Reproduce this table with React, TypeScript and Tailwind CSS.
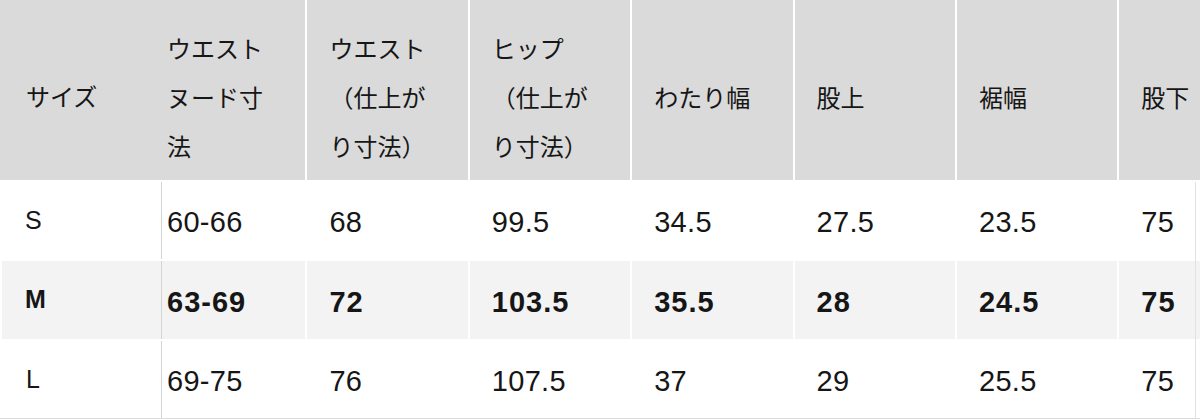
import { useEffect, useRef } from "react";

// size chart columns (the first "サイズ" column is frozen on the left)
const columns = [
  { head: ["ウエスト", "ヌード寸", "法"], s: "60-66", m: "63-69", l: "69-75" },
  { head: ["ウエスト", "（仕上が", "り寸法）"], s: "68", m: "72", l: "76" },
  { head: ["ヒップ", "（仕上が", "り寸法）"], s: "99.5", m: "103.5", l: "107.5" },
  { head: ["わたり幅"], s: "34.5", m: "35.5", l: "37" },
  { head: ["股上"], s: "27.5", m: "28", l: "29" },
  { head: ["裾幅"], s: "23.5", m: "24.5", l: "25.5" },
  { head: ["股下"], s: "75", m: "75", l: "75" },
];

const jp = "font-['Noto_Sans_CJK_JP','Noto_Sans',sans-serif]";
const num = "font-['Liberation_Sans','Noto_Sans_CJK_JP',sans-serif]";

export default function App() {
  const scroller = useRef<HTMLDivElement>(null);

  // table is scrolled a little to the right, like in the screenshot
  useEffect(() => {
    if (scroller.current) scroller.current.scrollLeft = 17;
  }, []);

  return (
    <div className="relative w-[1200px] h-[420px] overflow-hidden bg-white text-[#161616]">
      <div className="flex border-b border-[#dcdcdc]">
        {/* frozen size column */}
        <div className="flex flex-col gap-[2px] w-[162px] shrink-0">
          <div className={`h-[180px] bg-[#dadada] flex items-center pt-[12px] pl-[26px] text-[24px] ${jp}`}>
            サイズ
          </div>
          <div className={`h-[77px] flex items-center pl-[25px] border-r border-[#d4d4d4] text-[25px] ${num}`}>
            S
          </div>
          <div className={`h-[78px] flex items-center pl-[23px] ml-[2px] bg-[#f3f3f3] border-r border-[#d4d4d4] text-[25px] font-bold ${num}`}>
            M
          </div>
          <div className={`h-[77px] flex items-center pl-[26px] border-r border-[#d4d4d4] text-[25px] ${num}`}>
            L
          </div>
        </div>

        {/* scrolled columns */}
        <div ref={scroller} className="flex-1 overflow-hidden">
          <div className="grid grid-cols-[repeat(7,160.4px)] grid-rows-[180px_77px_78px_77px] gap-[2px] w-max">
            {columns.map((c, i) => (
              <div
                key={`h-${i}`}
                className={`bg-[#dadada] flex items-center pt-[12px] pl-[22px] text-[24px] leading-[49px] whitespace-nowrap ${jp}`}
              >
                <div>
                  {c.head.map((line, j) => (
                    <div key={j}>{line}</div>
                  ))}
                </div>
              </div>
            ))}
            {columns.map((c, i) => (
              <div key={`s-${i}`} className={`flex items-center pt-[5px] pl-[22px] text-[29px] tracking-[0.3px] ${num}`}>
                {c.s}
              </div>
            ))}
            {columns.map((c, i) => (
              <div key={`m-${i}`} className={`flex items-center pt-[5px] pl-[22px] bg-[#f3f3f3] text-[29px] font-bold tracking-[1px] ${num}`}>
                {c.m}
              </div>
            ))}
            {columns.map((c, i) => (
              <div key={`l-${i}`} className={`flex items-center pt-[4px] pl-[22px] text-[29px] tracking-[0.3px] ${num}`}>
                {c.l}
              </div>
            ))}
          </div>
        </div>
      </div>

      {/* edge line of the scroll area */}
      <div className="absolute top-[182px] left-[1195px] w-px h-[236px] bg-[#e2e2e2]" />
    </div>
  );
}
